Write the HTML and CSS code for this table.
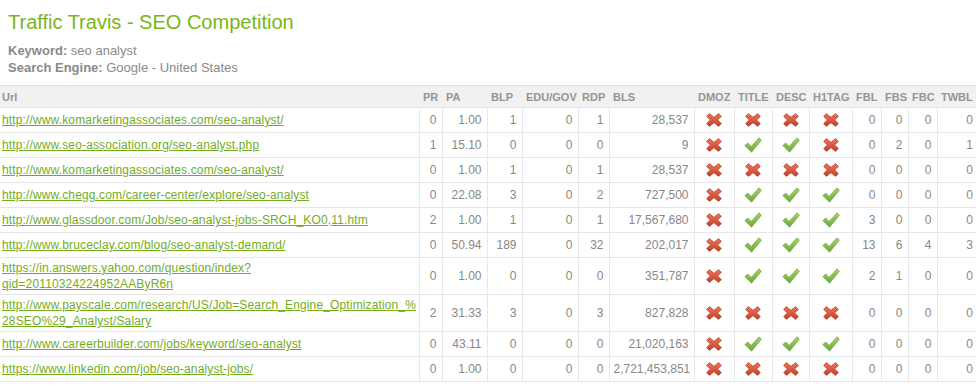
FILE: index.html
```html
<!DOCTYPE html>
<html>
<head>
<meta charset="utf-8">
<title>Traffic Travis - SEO Competition</title>
<link rel="stylesheet" href="styles.css">
</head>
<body>
<svg class="defs" width="0" height="0" aria-hidden="true">
  <defs>
    <linearGradient id="gx" x1="0" y1="0" x2="0" y2="1">
      <stop offset="0" stop-color="#ef7558"/>
      <stop offset="1" stop-color="#c4402a"/>
    </linearGradient>
    <linearGradient id="gc" x1="0" y1="0" x2="0" y2="1">
      <stop offset="0" stop-color="#a6d466"/>
      <stop offset="1" stop-color="#6aa93a"/>
    </linearGradient>
    <symbol id="ix" viewBox="0 0 16 14">
      <path d="M0.6 3.4 L3.4 0.6 L8 4.3 L12.6 0.6 L15.4 3.4 L11.6 7 L15.4 10.6 L12.6 13.4 L8 9.7 L3.4 13.4 L0.6 10.6 L4.4 7 Z" fill="url(#gx)" stroke="#b03d2a" stroke-width="0.7" stroke-linejoin="round"/>
    </symbol>
    <symbol id="ic" viewBox="0 0 18 16">
      <path d="M0.8 8.6 L3.8 6 L7.2 9.4 L15 0.8 L17.4 3.2 L7.6 15.2 Z" fill="url(#gc)" stroke="#64a034" stroke-width="0.6" stroke-linejoin="round"/>
    </symbol>
  </defs>
</svg>

<header class="intro">
  <h1 class="title">Traffic Travis - SEO Competition</h1>
  <div class="meta">
    <div><b>Keyword:</b> seo analyst</div>
    <div><b>Search Engine:</b> Google - United States</div>
  </div>
</header>

<table class="grid">
  <colgroup>
    <col class="w-url"><col class="w-pr"><col class="w-pa"><col class="w-blp"><col class="w-edu"><col class="w-rdp"><col class="w-bls"><col class="w-dmoz"><col class="w-title"><col class="w-desc"><col class="w-h1"><col class="w-fbl"><col class="w-fbs"><col class="w-fbc"><col class="w-twbl">
  </colgroup>
  <thead>
    <tr>
      <th class="url">Url</th><th>PR</th><th>PA</th><th>BLP</th><th>EDU/GOV</th><th>RDP</th><th>BLS</th><th>DMOZ</th><th>TITLE</th><th>DESC</th><th>H1TAG</th><th>FBL</th><th>FBS</th><th>FBC</th><th>TWBL</th>
    </tr>
  </thead>
  <tbody>
    <tr>
      <td class="url"><a href="#">http://www.komarketingassociates.com/seo-analyst/</a></td>
      <td>0</td><td>1.00</td><td>1</td><td>0</td><td>1</td><td>28,537</td>
      <td class="ico"><svg class="x"><use href="#ix"/></svg></td>
      <td class="ico"><svg class="x"><use href="#ix"/></svg></td>
      <td class="ico"><svg class="x"><use href="#ix"/></svg></td>
      <td class="ico"><svg class="x"><use href="#ix"/></svg></td>
      <td>0</td><td>0</td><td>0</td><td>0</td>
    </tr>
    <tr>
      <td class="url"><a href="#">http://www.seo-association.org/seo-analyst.php</a></td>
      <td>1</td><td>15.10</td><td>0</td><td>0</td><td>0</td><td>9</td>
      <td class="ico"><svg class="x"><use href="#ix"/></svg></td>
      <td class="ico"><svg class="c"><use href="#ic"/></svg></td>
      <td class="ico"><svg class="c"><use href="#ic"/></svg></td>
      <td class="ico"><svg class="x"><use href="#ix"/></svg></td>
      <td>0</td><td>2</td><td>0</td><td>1</td>
    </tr>
    <tr>
      <td class="url"><a href="#">http://www.komarketingassociates.com/seo-analyst/</a></td>
      <td>0</td><td>1.00</td><td>1</td><td>0</td><td>1</td><td>28,537</td>
      <td class="ico"><svg class="x"><use href="#ix"/></svg></td>
      <td class="ico"><svg class="x"><use href="#ix"/></svg></td>
      <td class="ico"><svg class="x"><use href="#ix"/></svg></td>
      <td class="ico"><svg class="x"><use href="#ix"/></svg></td>
      <td>0</td><td>0</td><td>0</td><td>0</td>
    </tr>
    <tr>
      <td class="url"><a href="#">http://www.chegg.com/career-center/explore/seo-analyst</a></td>
      <td>0</td><td>22.08</td><td>3</td><td>0</td><td>2</td><td>727,500</td>
      <td class="ico"><svg class="x"><use href="#ix"/></svg></td>
      <td class="ico"><svg class="c"><use href="#ic"/></svg></td>
      <td class="ico"><svg class="c"><use href="#ic"/></svg></td>
      <td class="ico"><svg class="c"><use href="#ic"/></svg></td>
      <td>0</td><td>0</td><td>0</td><td>0</td>
    </tr>
    <tr>
      <td class="url"><a href="#">http://www.glassdoor.com/Job/seo-analyst-jobs-SRCH_KO0,11.htm</a></td>
      <td>2</td><td>1.00</td><td>1</td><td>0</td><td>1</td><td>17,567,680</td>
      <td class="ico"><svg class="x"><use href="#ix"/></svg></td>
      <td class="ico"><svg class="c"><use href="#ic"/></svg></td>
      <td class="ico"><svg class="c"><use href="#ic"/></svg></td>
      <td class="ico"><svg class="c"><use href="#ic"/></svg></td>
      <td>3</td><td>0</td><td>0</td><td>0</td>
    </tr>
    <tr>
      <td class="url"><a href="#">http://www.bruceclay.com/blog/seo-analyst-demand/</a></td>
      <td>0</td><td>50.94</td><td>189</td><td>0</td><td>32</td><td>202,017</td>
      <td class="ico"><svg class="x"><use href="#ix"/></svg></td>
      <td class="ico"><svg class="c"><use href="#ic"/></svg></td>
      <td class="ico"><svg class="c"><use href="#ic"/></svg></td>
      <td class="ico"><svg class="c"><use href="#ic"/></svg></td>
      <td>13</td><td>6</td><td>4</td><td>3</td>
    </tr>
    <tr>
      <td class="url"><a href="#">https://in.answers.yahoo.com/question/index?<br>qid=20110324224952AAByR6n</a></td>
      <td>0</td><td>1.00</td><td>0</td><td>0</td><td>0</td><td>351,787</td>
      <td class="ico"><svg class="x"><use href="#ix"/></svg></td>
      <td class="ico"><svg class="c"><use href="#ic"/></svg></td>
      <td class="ico"><svg class="c"><use href="#ic"/></svg></td>
      <td class="ico"><svg class="c"><use href="#ic"/></svg></td>
      <td>2</td><td>1</td><td>0</td><td>0</td>
    </tr>
    <tr>
      <td class="url"><a href="#">http://www.payscale.com/research/US/Job=Search_Engine_Optimization_%<br>28SEO%29_Analyst/Salary</a></td>
      <td>2</td><td>31.33</td><td>3</td><td>0</td><td>3</td><td>827,828</td>
      <td class="ico"><svg class="x"><use href="#ix"/></svg></td>
      <td class="ico"><svg class="x"><use href="#ix"/></svg></td>
      <td class="ico"><svg class="x"><use href="#ix"/></svg></td>
      <td class="ico"><svg class="x"><use href="#ix"/></svg></td>
      <td>0</td><td>0</td><td>0</td><td>0</td>
    </tr>
    <tr>
      <td class="url"><a href="#">http://www.careerbuilder.com/jobs/keyword/seo-analyst</a></td>
      <td>0</td><td>43.11</td><td>0</td><td>0</td><td>0</td><td>21,020,163</td>
      <td class="ico"><svg class="x"><use href="#ix"/></svg></td>
      <td class="ico"><svg class="c"><use href="#ic"/></svg></td>
      <td class="ico"><svg class="c"><use href="#ic"/></svg></td>
      <td class="ico"><svg class="c"><use href="#ic"/></svg></td>
      <td>0</td><td>0</td><td>0</td><td>0</td>
    </tr>
    <tr>
      <td class="url"><a href="#">https://www.linkedin.com/job/seo-analyst-jobs/</a></td>
      <td>0</td><td>1.00</td><td>0</td><td>0</td><td>0</td><td>2,721,453,851</td>
      <td class="ico"><svg class="x"><use href="#ix"/></svg></td>
      <td class="ico"><svg class="x"><use href="#ix"/></svg></td>
      <td class="ico"><svg class="x"><use href="#ix"/></svg></td>
      <td class="ico"><svg class="x"><use href="#ix"/></svg></td>
      <td>0</td><td>0</td><td>0</td><td>0</td>
    </tr>
  </tbody>
</table>
</body>
</html>
```

FILE: styles.css
```css
html {
  overflow: hidden;
}

body {
  margin: 0;
  background: #ffffff;
  font-family: "Liberation Sans", Arial, sans-serif;
  color: #888888;
}

.defs {
  position: absolute;
  width: 0;
  height: 0;
  overflow: hidden;
}

.intro {
  padding: 10px 8px 0 8px;
}

.title {
  margin: 0;
  font-size: 20px;
  line-height: 24px;
  font-weight: normal;
  color: #7ab51d;
}

.meta {
  margin-top: 8px;
  font-size: 13px;
  line-height: 17px;
  color: #8a8a8a;
}

.meta b {
  font-weight: bold;
}

.grid {
  margin-top: 9px;
  width: 978px;
  table-layout: fixed;
  border-collapse: collapse;
  font-size: 12px;
}

.w-url { width: 419px; }
.w-pr { width: 23px; }
.w-pa { width: 45px; }
.w-blp { width: 35px; }
.w-edu { width: 56px; }
.w-rdp { width: 31px; }
.w-bls { width: 85px; }
.w-dmoz { width: 40px; }
.w-title { width: 38px; }
.w-desc { width: 37px; }
.w-h1 { width: 43px; }
.w-fbl { width: 29px; }
.w-fbs { width: 27px; }
.w-fbc { width: 29px; }
.w-twbl { width: 41px; }

.grid thead tr {
  height: 22px;
  background: #f1f1f1;
  border-top: 1px solid #e2e2e2;
  border-bottom: 1px solid #e2e2e2;
}

.grid th {
  padding: 0 4px;
  text-align: left;
  font-size: 11px;
  font-weight: bold;
  color: #959595;
  white-space: nowrap;
  overflow: visible;
}

.grid th.url {
  padding-left: 2px;
}

.grid tbody tr {
  height: 25px;
  border-bottom: 1px solid #e6e6e6;
}

.grid td {
  padding: 2px 5px 2px 4px;
  line-height: 16px;
  text-align: right;
  vertical-align: middle;
  color: #888888;
  border-left: 1px solid #e8e8e8;
  white-space: nowrap;
}

.grid td.url {
  padding-left: 2px;
  text-align: left;
  border-left: none;
}

.grid td.url a {
  color: #74ad1c;
  text-decoration: underline;
  letter-spacing: 0.14px;
}

.grid td.ico {
  text-align: center;
  padding: 0;
  line-height: 0;
}

.ico svg {
  display: inline-block;
  vertical-align: middle;
}

.ico svg.x {
  width: 16px;
  height: 14px;
}

.ico svg.c {
  width: 18px;
  height: 16px;
}
```
